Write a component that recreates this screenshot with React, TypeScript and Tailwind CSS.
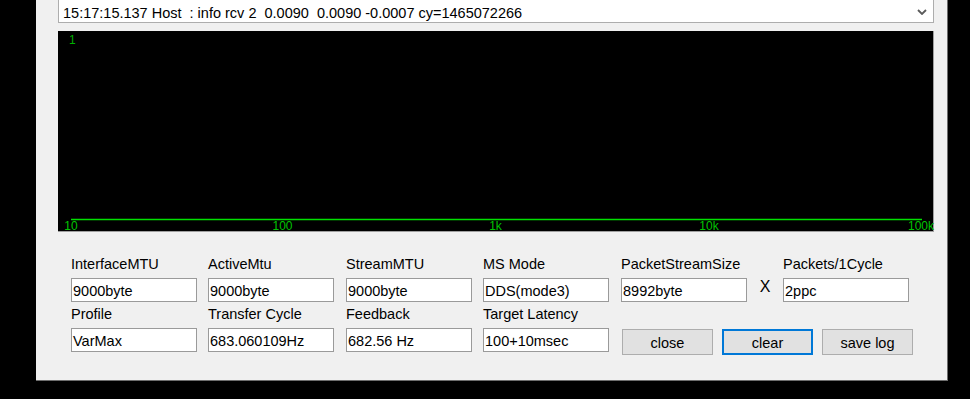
import React from 'react'

const font = { fontFamily: '"Liberation Sans", Arial, sans-serif' }

const row1 = [
  { label: 'InterfaceMTU', value: '9000byte', w: 'w-[137px]' },
  { label: 'ActiveMtu', value: '9000byte', w: 'w-[138px]' },
  { label: 'StreamMTU', value: '9000byte', w: 'w-[137px]' },
  { label: 'MS Mode', value: 'DDS(mode3)', w: 'w-[138px]' },
  { label: 'PacketStreamSize', value: '8992byte', w: 'w-[126px]' },
]

const row2 = [
  { label: 'Profile', value: 'VarMax', w: 'w-[137px]' },
  { label: 'Transfer Cycle', value: '683.060109Hz', w: 'w-[138px]' },
  { label: 'Feedback', value: '682.56 Hz', w: 'w-[137px]' },
  { label: 'Target Latency', value: '100+10msec', w: 'w-[138px]' },
]

function Field({ label, value, w }: { label: string; value: string; w: string }) {
  return (
    <div className={`${w} flex flex-col`}>
      <div className="h-[18px] leading-[18px] whitespace-nowrap">{label}</div>
      <div className="mt-[5px] w-[126px] h-[24px] border border-[#9a9a9a] bg-white pl-[1px] pt-[3px] leading-[18px] whitespace-nowrap overflow-hidden">
        {value}
      </div>
    </div>
  )
}

function Spectrum() {
  const ticks = [
    { x: 13, t: '10' },
    { x: 224.5, t: '100' },
    { x: 437.5, t: '1k' },
    { x: 651, t: '10k' },
  ]
  return (
    <svg width="875" height="200" className="block overflow-visible">
      <text x="11" y="13" fontSize="12" fill="#00b000" fontFamily="Liberation Sans, Arial, sans-serif">1</text>
      <line x1="13" y1="188.5" x2="864" y2="188.5" stroke="#00e000" strokeWidth="1.5" />
      {ticks.map((tk) => (
        <text key={tk.t} x={tk.x} y="198.5" fontSize="12" textAnchor="middle" fill="#00c400" fontFamily="Liberation Sans, Arial, sans-serif">
          {tk.t}
        </text>
      ))}
      <text x="876" y="198.5" fontSize="12" textAnchor="end" fill="#00c400" fontFamily="Liberation Sans, Arial, sans-serif">100k</text>
    </svg>
  )
}

export default function App() {
  return (
    <div className="w-[970px] h-[399px] bg-black overflow-hidden text-[14.5px] text-black" style={font}>
      <div className="ml-[36px] w-[912px] h-[381px] bg-[#f0f0f0] border-r border-b border-[#6e6e6e] pl-[22px] pr-[13px] flex flex-col">
        {/* log combo */}
        <div className="-mt-px h-[24px] border border-[#adadad] bg-white flex items-start justify-between">
          <div className="pl-[4px] pt-[4px] leading-[18px] whitespace-pre">
            15:17:15.137 Host  : info rcv 2  0.0090  0.0090 -0.0007 cy=1465072266
          </div>
          <svg width="10" height="6" className="mt-[9px] mr-[6px]">
            <polyline points="1,1 5,5 9,1" fill="none" stroke="#5a5a5a" strokeWidth="1.8" />
          </svg>
        </div>

        {/* graph */}
        <div className="mt-[8px] h-[201px] bg-black border-r border-b border-[#a0a0a0]">
          <Spectrum />
        </div>

        {/* settings */}
        <div className="mt-[23px] ml-[13px] flex flex-col">
          <div className="flex">
            {row1.map((f) => (
              <Field key={f.label} {...f} />
            ))}
            <div className="w-[36px] mt-[23px] text-center text-[16px] leading-[18px]">X</div>
            <Field label="Packets/1Cycle" value="2ppc" w="w-[126px]" />
          </div>
          <div className="flex mt-[3px]">
            {row2.map((f) => (
              <Field key={f.label} {...f} />
            ))}
            <div className="ml-px pt-[24px] flex gap-[9px]">
              <button className="w-[91px] h-[26px] bg-[#e1e1e1] border border-[#adadad] leading-[18px] pt-[2px]">close</button>
              <button className="w-[91px] h-[26px] bg-[#e1e1e1] border-2 border-[#0078d7] leading-[18px] pt-[1px]">clear</button>
              <button className="w-[91px] h-[26px] bg-[#e1e1e1] border border-[#adadad] leading-[18px] pt-[2px]">save log</button>
            </div>
          </div>
        </div>
      </div>
    </div>
  )
}
